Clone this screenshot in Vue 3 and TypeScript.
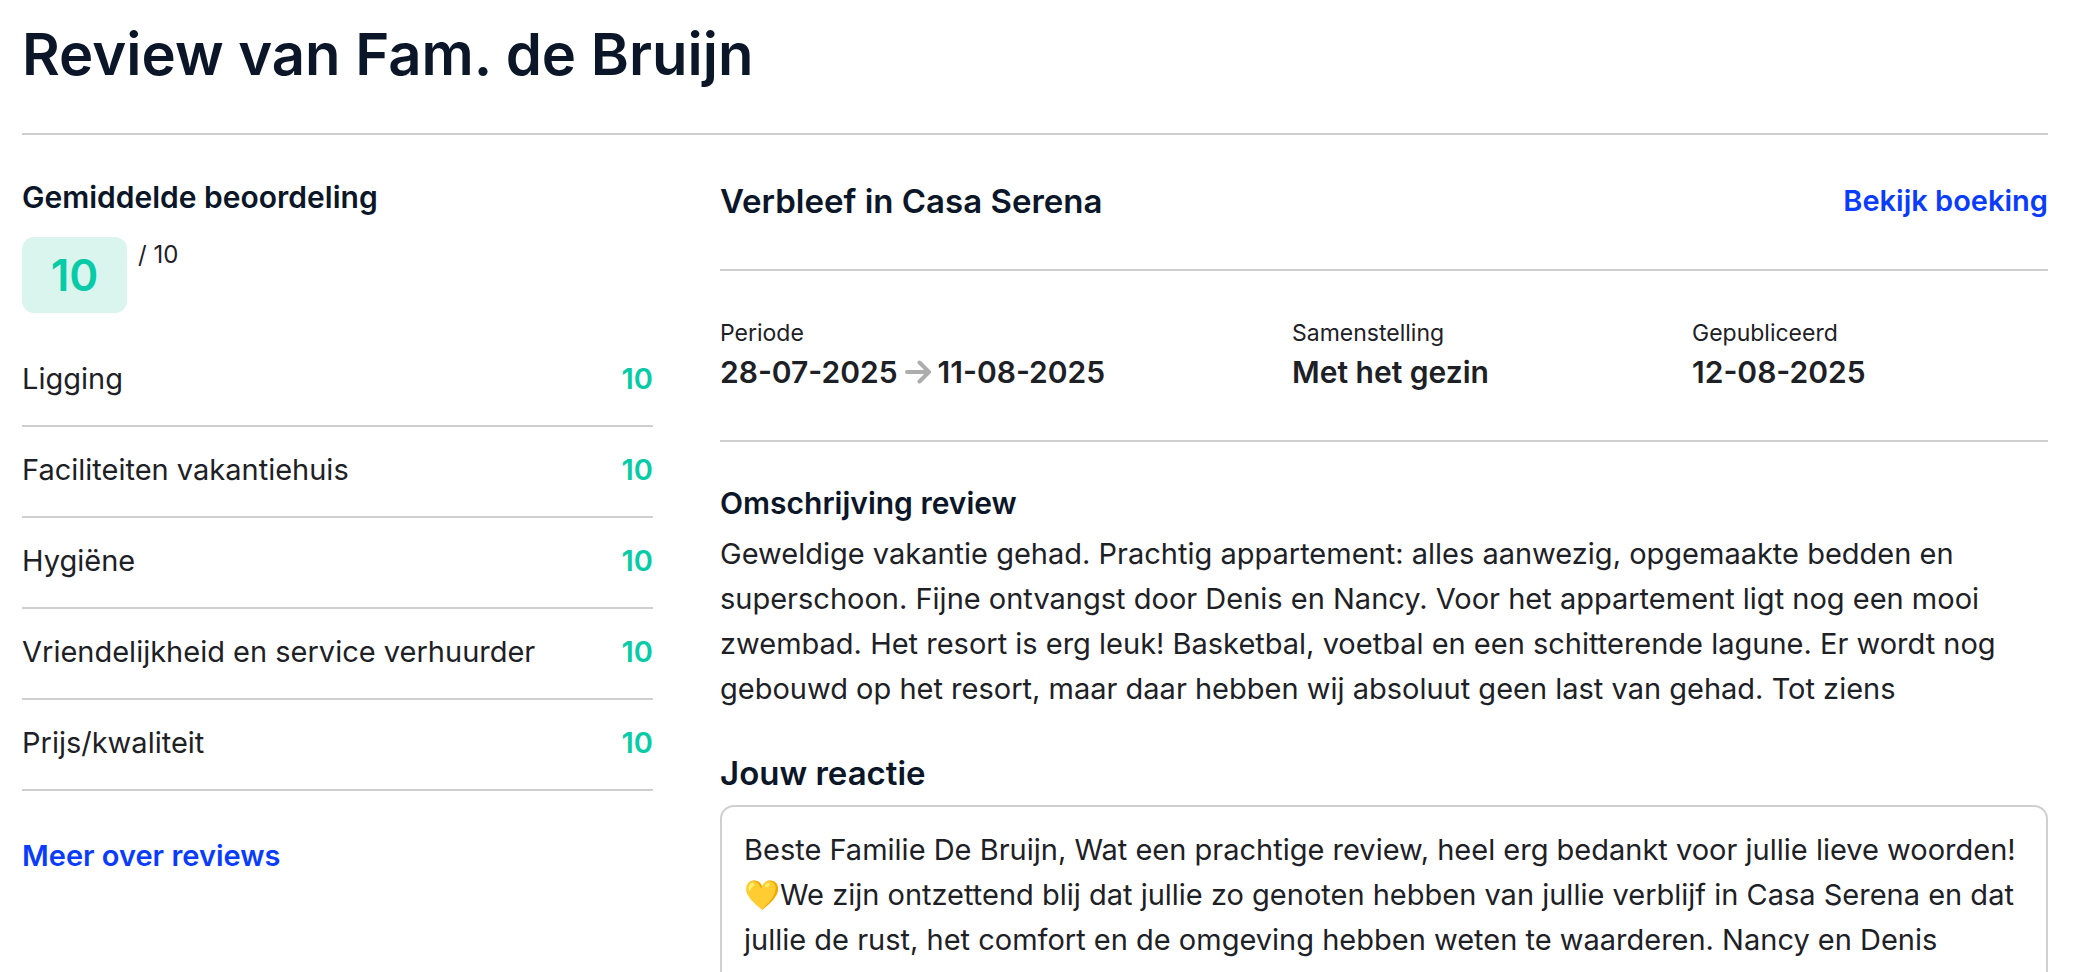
<script setup lang="ts">
import { ref } from 'vue'

interface Rating {
  label: string
  score: number
}

const ratings: Rating[] = [
  { label: 'Ligging', score: 10 },
  { label: 'Faciliteiten vakantiehuis', score: 10 },
  { label: 'Hygiëne', score: 10 },
  { label: 'Vriendelijkheid en service verhuurder', score: 10 },
  { label: 'Prijs/kwaliteit', score: 10 },
]

const review =
  'Geweldige vakantie gehad. Prachtig appartement: alles aanwezig, opgemaakte bedden en superschoon. ' +
  'Fijne ontvangst door Denis en Nancy. Voor het appartement ligt nog een mooi zwembad. Het resort is erg leuk! ' +
  'Basketbal, voetbal en een schitterende lagune. Er wordt nog gebouwd op het resort, maar daar hebben wij ' +
  'absoluut geen last van gehad. Tot ziens'

const reply = ref(
  'Beste Familie De Bruijn, Wat een prachtige review, heel erg bedankt voor jullie lieve woorden! ' +
  '💛We zijn ontzettend blij dat jullie zo genoten hebben van jullie verblijf in Casa Serena en dat ' +
  'jullie de rust, het comfort en de omgeving hebben weten te waarderen. Nancy en Denis',
)
</script>

<template>
  <main class="page">
    <header class="page-header">
      <h1>Review van Fam. de Bruijn</h1>
    </header>

    <div class="columns">
      <aside class="summary">
        <h3>Gemiddelde beoordeling</h3>
        <div class="average">
          <span class="badge">10</span>
          <span class="out-of">/ 10</span>
        </div>
        <ul class="ratings">
          <li v-for="rating in ratings" :key="rating.label">
            <span>{{ rating.label }}</span>
            <strong>{{ rating.score }}</strong>
          </li>
        </ul>
        <a class="link" href="#reviews">Meer over reviews</a>
      </aside>

      <section class="details">
        <div class="stay">
          <h2>Verbleef in Casa Serena</h2>
          <a class="link" href="#boeking">Bekijk boeking</a>
        </div>

        <dl class="meta">
          <div>
            <dt>Periode</dt>
            <dd>
              <span>28-07-2025</span>
              <svg class="arrow" viewBox="0 0 26 24" aria-hidden="true">
                <path d="M2 12H24M14.500 2.500L24 12L14.500 21.500" />
              </svg>
              <span>11-08-2025</span>
            </dd>
          </div>
          <div>
            <dt>Samenstelling</dt>
            <dd>Met het gezin</dd>
          </div>
          <div>
            <dt>Gepubliceerd</dt>
            <dd>12-08-2025</dd>
          </div>
        </dl>

        <h3 class="review-title">Omschrijving review</h3>
        <p class="review-text">{{ review }}</p>

        <label class="reply-label" for="reply">Jouw reactie</label>
        <textarea id="reply" v-model="reply" class="reply" rows="4"></textarea>
      </section>
    </div>
  </main>
</template>

<style>
body {
  margin: 0;
  background: #fff;
}
</style>

<style scoped>
.page {
  box-sizing: border-box;
  height: 100vh;
  overflow: hidden;
  padding: 18px 32px 0 22px;
  font-family: "Inter", "Liberation Sans", sans-serif;
  font-size: 29px;
  line-height: 45px;
  color: #1d2126;
}

h1,
h2,
h3,
p,
ul,
dl,
dd {
  margin: 0;
  padding: 0;
}

h1,
h2,
h3,
.reply-label {
  font-weight: 600;
  color: #0b1628;
}

h1 {
  font-size: 58px;
  line-height: 72px;
}

h2,
.reply-label {
  font-size: 33px;
  line-height: 44px;
}

h3 {
  font-size: 30px;
  line-height: 36px;
}

.page-header {
  padding-bottom: 43px;
  border-bottom: 2px solid #d0d0d0;
}

.columns {
  display: grid;
  grid-template-columns: minmax(0, 631fr) minmax(0, 1328fr);
  column-gap: 67px;
  padding-top: 44px;
}

.average {
  display: flex;
  gap: 11px;
  margin-top: 22px;
}

.badge {
  width: 105px;
  border-radius: 12px;
  background: #daf5ee;
  color: #06cba6;
  font-size: 44px;
  font-weight: 600;
  line-height: 76px;
  text-align: center;
}

.out-of {
  font-size: 24px;
  line-height: 36px;
}

.ratings {
  margin-top: 23px;
  list-style: none;
}

.ratings li {
  display: flex;
  justify-content: space-between;
  padding: 20px 0 24px;
  border-bottom: 2px solid #d0d0d0;
}

.ratings strong {
  color: #06cba6;
  font-weight: 600;
}

.link {
  color: #0a3cff;
  font-weight: 600;
  line-height: 36px;
  text-decoration: none;
}

.summary .link {
  display: inline-block;
  margin-top: 47px;
}

.stay {
  display: flex;
  align-items: center;
  justify-content: space-between;
  padding-bottom: 46px;
  border-bottom: 2px solid #d0d0d0;
}

.meta {
  display: grid;
  grid-template-columns: 572fr 400fr 356fr;
  padding: 45px 0 46px;
  border-bottom: 2px solid #d0d0d0;
}

dt {
  font-size: 23px;
  line-height: 34px;
}

dd {
  display: flex;
  align-items: center;
  gap: 7px;
  font-size: 30px;
  font-weight: 600;
  line-height: 44px;
}

.arrow {
  width: 26px;
  height: 24px;
  fill: none;
  stroke: #adadad;
  stroke-width: 4;
  stroke-linecap: round;
  stroke-linejoin: round;
}

.review-title {
  margin-top: 43px;
}

.review-text {
  margin-top: 10px;
}

.reply-label {
  display: block;
  margin-top: 40px;
}

.reply {
  box-sizing: border-box;
  display: block;
  width: 100%;
  margin-top: 10px;
  padding: 20px 22px;
  border: 2px solid #d0d0d0;
  border-radius: 14px;
  background: #fff;
  color: inherit;
  font: inherit;
  resize: none;
  overflow: hidden;
}
</style>
